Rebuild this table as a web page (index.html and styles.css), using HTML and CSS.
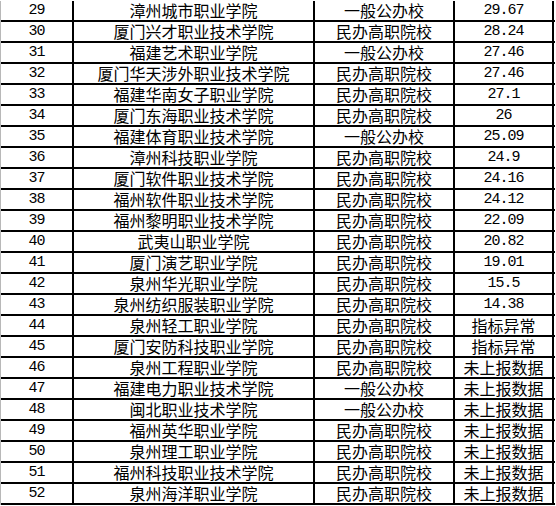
FILE: index.html
```html
<!DOCTYPE html>
<html lang="zh-CN">
<head>
<meta charset="utf-8">
<link rel="stylesheet" href="styles.css">
</head>
<body>
<div class="table">
  <div class="row"><div class="cell num">29</div><div class="cell">漳州城市职业学院</div><div class="cell">一般公办校</div><div class="cell num">29.67</div></div>
  <div class="row"><div class="cell num">30</div><div class="cell">厦门兴才职业技术学院</div><div class="cell">民办高职院校</div><div class="cell num">28.24</div></div>
  <div class="row"><div class="cell num">31</div><div class="cell">福建艺术职业学院</div><div class="cell">一般公办校</div><div class="cell num">27.46</div></div>
  <div class="row"><div class="cell num">32</div><div class="cell">厦门华天涉外职业技术学院</div><div class="cell">民办高职院校</div><div class="cell num">27.46</div></div>
  <div class="row"><div class="cell num">33</div><div class="cell">福建华南女子职业学院</div><div class="cell">民办高职院校</div><div class="cell num">27.1</div></div>
  <div class="row"><div class="cell num">34</div><div class="cell">厦门东海职业技术学院</div><div class="cell">民办高职院校</div><div class="cell num">26</div></div>
  <div class="row"><div class="cell num">35</div><div class="cell">福建体育职业技术学院</div><div class="cell">一般公办校</div><div class="cell num">25.09</div></div>
  <div class="row"><div class="cell num">36</div><div class="cell">漳州科技职业学院</div><div class="cell">民办高职院校</div><div class="cell num">24.9</div></div>
  <div class="row"><div class="cell num">37</div><div class="cell">厦门软件职业技术学院</div><div class="cell">民办高职院校</div><div class="cell num">24.16</div></div>
  <div class="row"><div class="cell num">38</div><div class="cell">福州软件职业技术学院</div><div class="cell">民办高职院校</div><div class="cell num">24.12</div></div>
  <div class="row"><div class="cell num">39</div><div class="cell">福州黎明职业技术学院</div><div class="cell">民办高职院校</div><div class="cell num">22.09</div></div>
  <div class="row"><div class="cell num">40</div><div class="cell">武夷山职业学院</div><div class="cell">民办高职院校</div><div class="cell num">20.82</div></div>
  <div class="row"><div class="cell num">41</div><div class="cell">厦门演艺职业学院</div><div class="cell">民办高职院校</div><div class="cell num">19.01</div></div>
  <div class="row"><div class="cell num">42</div><div class="cell">泉州华光职业学院</div><div class="cell">民办高职院校</div><div class="cell num">15.5</div></div>
  <div class="row"><div class="cell num">43</div><div class="cell">泉州纺织服装职业学院</div><div class="cell">民办高职院校</div><div class="cell num">14.38</div></div>
  <div class="row"><div class="cell num">44</div><div class="cell">泉州轻工职业学院</div><div class="cell">民办高职院校</div><div class="cell">指标异常</div></div>
  <div class="row"><div class="cell num">45</div><div class="cell">厦门安防科技职业学院</div><div class="cell">民办高职院校</div><div class="cell">指标异常</div></div>
  <div class="row"><div class="cell num">46</div><div class="cell">泉州工程职业学院</div><div class="cell">民办高职院校</div><div class="cell">未上报数据</div></div>
  <div class="row"><div class="cell num">47</div><div class="cell">福建电力职业技术学院</div><div class="cell">一般公办校</div><div class="cell">未上报数据</div></div>
  <div class="row"><div class="cell num">48</div><div class="cell">闽北职业技术学院</div><div class="cell">一般公办校</div><div class="cell">未上报数据</div></div>
  <div class="row"><div class="cell num">49</div><div class="cell">福州英华职业学院</div><div class="cell">民办高职院校</div><div class="cell">未上报数据</div></div>
  <div class="row"><div class="cell num">50</div><div class="cell">泉州理工职业学院</div><div class="cell">民办高职院校</div><div class="cell">未上报数据</div></div>
  <div class="row"><div class="cell num">51</div><div class="cell">福州科技职业技术学院</div><div class="cell">民办高职院校</div><div class="cell">未上报数据</div></div>
  <div class="row"><div class="cell num">52</div><div class="cell">泉州海洋职业学院</div><div class="cell">民办高职院校</div><div class="cell">未上报数据</div></div>
</div>
</body>
</html>
```

FILE: styles.css
```css
html, body {
  margin: 0;
  padding: 0;
  background: #ffffff;
}

body {
  padding-top: 1px;
  font-family: "Noto Sans CJK SC", "Noto Sans", sans-serif;
  font-size: 16px;
  color: #000000;
  overflow: hidden;
}

.table {
  width: 554px;
  border-left: 1px solid #b8b8b8;
}

.row {
  display: grid;
  grid-template-columns: 73px 241px 140px 99px;
  height: 21px;
  box-sizing: border-box;
  border-bottom: 2px solid #000000;
}

.cell {
  box-sizing: border-box;
  border-right: 2px solid #000000;
  height: 19px;
  line-height: 19px;
  text-align: center;
  white-space: nowrap;
}

.num {
  font-family: "Liberation Mono", "DejaVu Sans Mono", monospace;
  font-size: 15px;
  letter-spacing: -1px;
  line-height: 20px;
}
```
